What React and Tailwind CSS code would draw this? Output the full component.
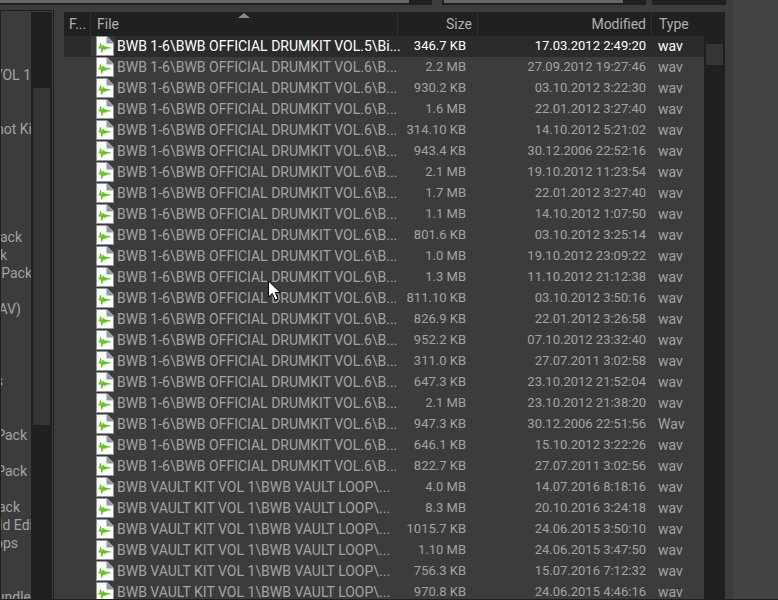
const folders = [
  { row: 3, name: "VOL 1", end: 31 },
  { row: 6, name: "Shot Ki", end: 32 },
  { row: 12, name: "Pack", end: 22 },
  { row: 13, name: "k", end: 7 },
  { row: 14, name: "Pack", end: 32 },
  { row: 16, name: "(WAV)", end: 21 },
  { row: 20, name: "s", end: 3 },
  { row: 23, name: "Pack", end: 27 },
  { row: 25, name: "Pack", end: 27 },
  { row: 27, name: "Pack", end: 20 },
  { row: 28, name: "ld Edi", end: 33 },
  { row: 29, name: "ops", end: 18 },
  { row: 32, name: "undle", end: 31 },
];

const kit5 = "BWB 1-6\\BWB OFFICIAL DRUMKIT VOL.5\\Bi...";
const kit6 = "BWB 1-6\\BWB OFFICIAL DRUMKIT VOL.6\\B...";
const vault = "BWB VAULT KIT VOL 1\\BWB VAULT LOOP\\...";

const files = [
  { name: kit5, size: "346.7 KB", modified: "17.03.2012 2:49:20", type: "wav" },
  { name: kit6, size: "2.2 MB", modified: "27.09.2012 19:27:46", type: "wav" },
  { name: kit6, size: "930.2 KB", modified: "03.10.2012 3:22:30", type: "wav" },
  { name: kit6, size: "1.6 MB", modified: "22.01.2012 3:27:40", type: "wav" },
  { name: kit6, size: "314.10 KB", modified: "14.10.2012 5:21:02", type: "wav" },
  { name: kit6, size: "943.4 KB", modified: "30.12.2006 22:52:16", type: "wav" },
  { name: kit6, size: "2.1 MB", modified: "19.10.2012 11:23:54", type: "wav" },
  { name: kit6, size: "1.7 MB", modified: "22.01.2012 3:27:40", type: "wav" },
  { name: kit6, size: "1.1 MB", modified: "14.10.2012 1:07:50", type: "wav" },
  { name: kit6, size: "801.6 KB", modified: "03.10.2012 3:25:14", type: "wav" },
  { name: kit6, size: "1.0 MB", modified: "19.10.2012 23:09:22", type: "wav" },
  { name: kit6, size: "1.3 MB", modified: "11.10.2012 21:12:38", type: "wav" },
  { name: kit6, size: "811.10 KB", modified: "03.10.2012 3:50:16", type: "wav" },
  { name: kit6, size: "826.9 KB", modified: "22.01.2012 3:26:58", type: "wav" },
  { name: kit6, size: "952.2 KB", modified: "07.10.2012 23:32:40", type: "wav" },
  { name: kit6, size: "311.0 KB", modified: "27.07.2011 3:02:58", type: "wav" },
  { name: kit6, size: "647.3 KB", modified: "23.10.2012 21:52:04", type: "wav" },
  { name: kit6, size: "2.1 MB", modified: "23.10.2012 21:38:20", type: "wav" },
  { name: kit6, size: "947.3 KB", modified: "30.12.2006 22:51:56", type: "Wav" },
  { name: kit6, size: "646.1 KB", modified: "15.10.2012 3:22:26", type: "wav" },
  { name: kit6, size: "822.7 KB", modified: "27.07.2011 3:02:56", type: "wav" },
  { name: vault, size: "4.0 MB", modified: "14.07.2016 8:18:16", type: "wav" },
  { name: vault, size: "8.3 MB", modified: "20.10.2016 3:24:18", type: "wav" },
  { name: vault, size: "1015.7 KB", modified: "24.06.2015 3:50:10", type: "wav" },
  { name: vault, size: "1.10 MB", modified: "24.06.2015 3:47:50", type: "wav" },
  { name: vault, size: "756.3 KB", modified: "15.07.2016 7:12:32", type: "wav" },
  { name: vault, size: "970.8 KB", modified: "24.06.2015 4:46:16", type: "wav" },
];

const WavIcon = () => (
  <svg width="18" height="20" viewBox="0 0 18 20" className="shrink-0">
    <path d="M0.5 0.5H11L17.5 7V19.5H0.5Z" fill="#fbfcfc" stroke="#8f999c" />
    <path d="M10.5 0.5L17.5 7.5H10.5Z" fill="#8f999c" />
    <path
      d="M2.5 11.8H3.8L4.6 8L5.8 16L7 9.5L8 13.5L9 10.5L10 13L11 11.2L12 11.8H14.5"
      fill="none"
      stroke="#63bd1e"
      strokeWidth="1.3"
      strokeLinejoin="round"
    />
  </svg>
);

const Cursor = () => (
  <svg width="13" height="21" viewBox="0 0 13 21" className="absolute left-[268px] top-[280px]">
    <path
      d="M0.5 1V17L4.3 13.5L7 20L10 18.8L7.3 12.5H12.2Z"
      fill="#fff"
      stroke="#000"
    />
  </svg>
);

// Bottom edge of the controls above the list
const TopBar = () => (
  <div className="flex h-[5px] shrink-0">
    <div className="flex-1 bg-[#202020] pr-[23px]">
      <div className="h-[3px] bg-[#666666]" />
    </div>
    <div className="ml-[10px] w-[204px] bg-[#202020] pl-[2px] pr-[23px]">
      <div className="h-[3px] bg-[#666666]" />
    </div>
    <div className="ml-[6px] mr-[52px] w-[74px] bg-[#202020]" />
  </div>
);

const FolderTree = () => (
  <nav className="flex w-[54px] shrink-0 overflow-hidden border-x border-t border-[#202020]">
    <ul className="w-[30px] shrink-0 overflow-hidden pt-px">
      {Array.from({ length: 33 }, (_, row) => {
        const folder = folders.find((f) => f.row === row);
        return (
          <li
            key={row}
            className="-ml-px flex h-[18px] items-center justify-end whitespace-nowrap"
            style={{ width: folder ? folder.end : 0 }}
          >
            {folder && folder.name}
          </li>
        );
      })}
    </ul>
    <div className="mt-px w-[21px] bg-[#202020] px-[2px] pt-[76px]">
      <div className="h-[337px] bg-[#353535]" />
    </div>
  </nav>
);

const FileTable = () => (
  <table className="w-full table-fixed border-separate border-spacing-0 whitespace-nowrap">
    <colgroup>
      <col className="w-[27px]" />
      <col />
      <col className="w-[80px]" />
      <col className="w-[174px]" />
      <col className="w-[73px]" />
    </colgroup>
    <thead>
      <tr className="h-[24px] bg-[#202020] text-left text-[#b0b0b0]">
        <th className="border-r border-[#303030] p-0 pl-[5px] font-normal">F...</th>
        <th className="relative border-r border-[#303030] p-0 pl-[6px] font-normal">
          File
          <svg width="12" height="5" viewBox="0 0 12 5" className="absolute left-[147px] top-px">
            <path d="M0 5L6 0L12 5Z" fill="#8a8a8a" />
          </svg>
        </th>
        <th className="border-r border-[#303030] p-0 pr-[5px] text-right font-normal">Size</th>
        <th className="border-r border-[#303030] p-0 pr-[5px] text-right font-normal">Modified</th>
        <th className="p-0 pl-[7px] font-normal">Type</th>
      </tr>
    </thead>
    <tbody className="align-top leading-[20px]">
      {files.map((file, index) => (
        <tr
          key={index}
          className={index === 0 ? "h-[21px] bg-[#2b2b2b] text-white" : "h-[21px]"}
        >
          <td className="p-0"></td>
          <td className="p-0 align-top">
            <div className="flex gap-[2px]">
              <span className={`pl-[5px] pr-px ${index === 0 ? "bg-[#383838]" : ""}`}>
                <WavIcon />
              </span>
              <span>{file.name}</span>
            </div>
          </td>
          <td className="p-0 pr-[12px] text-right align-top text-[13px] leading-[20px]">{file.size}</td>
          <td className="p-0 pr-[6px] text-right align-top text-[13px] leading-[20px]">{file.modified}</td>
          <td className="p-0 pl-[6px] align-top">{file.type}</td>
        </tr>
      ))}
    </tbody>
  </table>
);

export default function App() {
  return (
    <div className="relative flex h-screen flex-col overflow-hidden border-b border-[#202020] bg-[#3c3c3c] font-['Roboto',sans-serif] text-sm leading-[18px] text-[#a3a3a3]">
      <TopBar />
      <div className="flex min-h-0 flex-1 pt-[5px]">
        <FolderTree />
        <main className="relative ml-[10px] mt-[2px] min-w-0 flex-1 overflow-hidden">
          <FileTable />
          <div className="absolute bottom-0 right-0 top-[23px] w-[21px] bg-[#202020] px-[2px] pt-[9px]">
            <div className="h-[21px] bg-[#353535]" />
          </div>
        </main>
        <div className="w-[8px] shrink-0" />
        <div className="-mt-[10px] w-[45px] shrink-0 bg-[#444446]" />
      </div>
      <Cursor />
    </div>
  );
}
